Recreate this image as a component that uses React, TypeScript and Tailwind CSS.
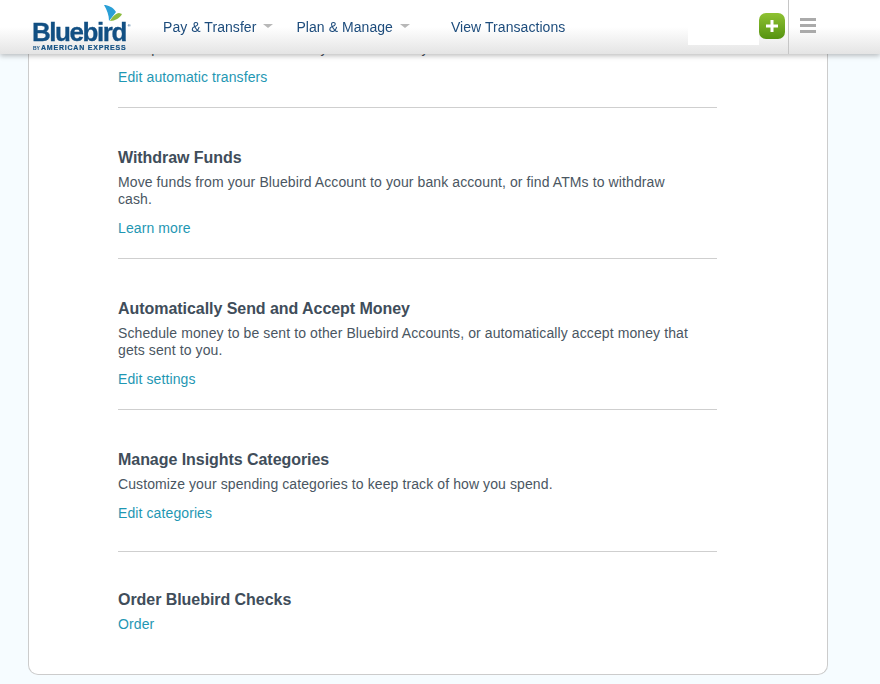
import React from 'react'

const font = { fontFamily: '"Liberation Sans", Arial, sans-serif' }

function Caret() {
  return <span className="ml-[7px] mt-[-2px] h-0 w-0 border-x-[5px] border-t-[4px] border-x-transparent border-t-[#b8b8b8]" />
}

function Logo() {
  return (
    <div className="relative ml-[32px] w-[131px] shrink-0 pt-[20px] text-[#114f83]">
      <svg className="absolute left-[72px] top-[5px]" width="20" height="17" viewBox="0 0 20 17">
        <path d="M0 0 C4 0 9 2 12 7 L5 16 C5 10 3 5 0 0Z" fill="#2a9fd6" />
        <path d="M6 16 C8 12 12 8 15 8 L18 9 C16 13 11 16 6 16Z" fill="#8cbb3f" />
      </svg>
      <div className="flex items-start text-[26px] font-bold leading-[24px] tracking-[-1.45px] [-webkit-text-stroke:0.3px_#114f83]">
        Bluebird
        <span className="ml-[2px] mt-[4px] text-[4px] leading-[4px] tracking-normal [-webkit-text-stroke:0]">®</span>
      </div>
      <div className="ml-[1px] flex items-baseline whitespace-nowrap font-bold leading-[7px]">
        <span className="mr-[1px] text-[5px]">BY</span>
        <span className="text-[7px] tracking-[0.8px] [-webkit-text-stroke:0.2px_#114f83]">AMERICAN EXPRESS</span>
      </div>
    </div>
  )
}

function Header() {
  return (
    <header className="fixed inset-x-0 top-0 z-10 flex h-[54px] items-start bg-gradient-to-b from-white from-50% to-[#e4e4e4] shadow-[0_2px_5px_rgba(0,0,0,0.25)]">
      <Logo />
      <nav className="flex h-[54px] items-center pb-[1px] text-sm leading-5 tracking-[0.06px] text-[#1d4c7c]">
        <a className="flex items-center">Pay &amp; Transfer<Caret /></a>
        <a className="ml-[23px] flex items-center">Plan &amp; Manage<Caret /></a>
        <a className="ml-[41px]">View Transactions</a>
      </nav>
      <div className="ml-auto flex h-[54px] items-start">
        <div className="h-[45px] w-[71px] bg-white" />
        <button className="mt-[13px] flex h-[26px] w-[26px] items-center justify-center rounded-[7px] bg-gradient-to-b from-[#8fc232] to-[#55930f]">
          <svg width="12" height="12" viewBox="0 0 12 12">
            <path d="M4.5 0h3v4.5H12v3H7.5V12h-3V7.5H0v-3h4.5z" fill="#fff" />
          </svg>
        </button>
        <div className="ml-[3px] h-[54px] w-px bg-[#c6c6c6]" />
        <div className="ml-[11px] mr-[64px] mt-[18px] flex w-[16px] flex-col gap-[3px]">
          <span className="h-[3px] bg-[#aaaaaa]" />
          <span className="h-[3px] bg-[#aaaaaa]" />
          <span className="h-[3px] bg-[#aaaaaa]" />
        </div>
      </div>
    </header>
  )
}

function Title({ children }: { children: React.ReactNode }) {
  return <h2 className="text-base font-bold leading-5 tracking-[-0.05px] text-[#404d5a]">{children}</h2>
}

function Body({ children }: { children: React.ReactNode }) {
  return <p className="mt-[6px] w-[575px] text-sm leading-[17px] tracking-[0.1px] text-[#4a5662]">{children}</p>
}

function Action({ children }: { children: React.ReactNode }) {
  return <a className="mt-[10px] block text-sm leading-5 tracking-[0.1px] text-[#1f97b3]">{children}</a>
}

export default function App() {
  return (
    <div className="h-[684px] overflow-hidden bg-[#f6fcff] pl-[28px]" style={font}>
      <Header />
      <main className="h-[675px] w-[800px] rounded-b-[10px] border-x border-b border-[#cccccc] bg-white pl-[89px] pr-[110px] pt-[34px]">
        <section className="border-b border-[#cfcfcf] pb-5">
          <Body>Set up automatic transfers from your account to your Bluebird Account.</Body>
          <Action>Edit automatic transfers</Action>
        </section>
        <section className="mt-[40px] border-b border-[#cfcfcf] pb-5">
          <Title>Withdraw Funds</Title>
          <Body>Move funds from your Bluebird Account to your bank account, or find ATMs to withdraw cash.</Body>
          <Action>Learn more</Action>
        </section>
        <section className="mt-[40px] border-b border-[#cfcfcf] pb-5">
          <Title>Automatically Send and Accept Money</Title>
          <Body>Schedule money to be sent to other Bluebird Accounts, or automatically accept money that gets sent to you.</Body>
          <Action>Edit settings</Action>
        </section>
        <section className="mt-[40px] border-b border-[#cfcfcf] pb-[28px]">
          <Title>Manage Insights Categories</Title>
          <Body>Customize your spending categories to keep track of how you spend.</Body>
          <Action>Edit categories</Action>
        </section>
        <section className="mt-[38px]">
          <Title>Order Bluebird Checks</Title>
          <a className="mt-[4px] block text-sm leading-5 tracking-[0.1px] text-[#1f97b3]">Order</a>
        </section>
      </main>
    </div>
  )
}
